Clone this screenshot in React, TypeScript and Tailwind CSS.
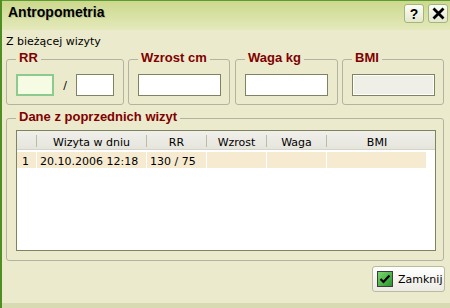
import React from "react";

const legendCls =
  "px-[3px] pb-[3px] font-['Liberation_Sans',sans-serif] font-bold text-[13px] leading-[15px] text-[#800000]";

const TitleBar = () => (
  <div className="h-[30px] flex items-start pt-[3px] pl-[6px] pr-[2px] border-t border-[#5f9b33] bg-gradient-to-b from-[#cbd98c] to-[#e5e9bb]">
    <div className="flex-1 font-['Liberation_Sans',sans-serif] font-bold text-[14px] leading-[17px] [text-shadow:1px_1px_0_#b9c58d]">
      Antropometria
    </div>
    <div className="flex gap-[4px]">
      <div className="w-[20px] h-[19px] rounded-[3px] border border-[#a3b47f] bg-gradient-to-b from-[#fdfdf6] to-[#e4e8cc] flex items-center justify-center font-['Liberation_Sans',sans-serif] font-bold text-[14px] leading-none">
        ?
      </div>
      <div className="w-[20px] h-[19px] rounded-[3px] border border-[#a3b47f] bg-gradient-to-b from-[#fdfdf6] to-[#e4e8cc] flex items-center justify-center">
        <svg width="13" height="13" viewBox="0 0 13 13">
          <path d="M1.5 1.5 L11.5 11.5 M11.5 1.5 L1.5 11.5" stroke="#000" strokeWidth="2.8" />
        </svg>
      </div>
    </div>
  </div>
);

const Field = ({ disabled }: { disabled?: boolean }) =>
  disabled ? (
    <div className="w-[83px] h-[22px] border border-[#7f8460] bg-[#efefe8] shadow-[inset_0_0_0_1px_#ffffff]" />
  ) : (
    <div className="w-[83px] h-[22px] border border-[#7f8460] bg-white" />
  );

const cols = [
  { w: "w-[20px]", h: "", v: "1", sep: true },
  { w: "w-[110px]", h: "Wizyta w dniu", v: "20.10.2006 12:18", sep: true },
  { w: "w-[60px]", h: "RR", v: "130 / 75", sep: true },
  { w: "w-[60px]", h: "Wzrost", v: "", sep: true },
  { w: "w-[60px]", h: "Waga", v: "", sep: true },
  { w: "w-[100px]", h: "BMI", v: "", sep: false },
];

const CheckIcon = () => (
  <svg width="16" height="16" viewBox="0 0 16 16">
    <defs>
      <linearGradient id="g" x1="0" y1="0" x2="1" y2="1">
        <stop offset="0" stopColor="#7fd86f" />
        <stop offset="1" stopColor="#24952a" />
      </linearGradient>
    </defs>
    <rect x="0.5" y="0.5" width="15" height="15" fill="url(#g)" stroke="#3c3c3c" />
    <path d="M3.5 8 L6.5 11 L12.5 4.5" fill="none" stroke="#000" strokeWidth="2.2" />
  </svg>
);

export default function App() {
  return (
    <div className="w-[450px] h-[308px] flex flex-col bg-[#eceacd] border-l-2 border-[#4e8f22] font-['DejaVu_Sans',sans-serif] text-[11px] leading-[13px] text-black overflow-hidden">
      <TitleBar />
      <div className="flex flex-col flex-1 pl-[4px] pr-[6px] pt-[5px]">
        <div>Z bieżącej wizyty</div>

        <div className="flex mt-[2px]">
          <fieldset className="w-[118px] border border-[#b4b2a0] rounded-[3px] pl-[9px] pr-[8px] pt-[6px] pb-[8px]">
            <legend className={legendCls}>RR</legend>
            <div className="flex items-center">
              <div className="w-[38px] h-[22px] border-2 border-[#8dca8d] bg-[#f6fce3]" />
              <div className="w-[22px] text-center">/</div>
              <div className="w-[38px] h-[22px] border border-[#7f8460] bg-white" />
            </div>
          </fieldset>
          <fieldset className="w-[102px] ml-[4px] border border-[#b4b2a0] rounded-[3px] pl-[9px] pr-[8px] pt-[6px] pb-[8px]">
            <legend className={legendCls}>Wzrost cm</legend>
            <Field />
          </fieldset>
          <fieldset className="w-[103px] ml-[5px] border border-[#b4b2a0] rounded-[3px] pl-[9px] pr-[8px] pt-[6px] pb-[8px]">
            <legend className={legendCls}>Waga kg</legend>
            <Field />
          </fieldset>
          <fieldset className="w-[102px] ml-[4px] border border-[#b4b2a0] rounded-[3px] pl-[9px] pr-[8px] pt-[6px] pb-[8px]">
            <legend className={legendCls}>BMI</legend>
            <Field disabled />
          </fieldset>
        </div>

        <fieldset className="mt-[4px] border border-[#b4b2a0] rounded-[3px] pl-[9px] pr-[7px] pt-[3px] pb-[9px]">
          <legend className={legendCls}>Dane z poprzednich wizyt</legend>
          <div className="h-[121px] border border-[#7f8460] bg-white flex flex-col">
            <div className="h-[19px] flex bg-gradient-to-b from-[#f0efea] to-[#e6e5dd] border-b border-[#d6d3c4]">
              {cols.map((c, i) => (
                <div key={i} className={`${c.w} flex items-start`}>
                  <div className="flex-1 text-center pt-[5px] leading-[13px]">{c.h}</div>
                  {c.sep && <div className="w-px h-[12px] mt-[4px] bg-[#bdbaa8]" />}
                </div>
              ))}
            </div>
            <div className="flex mt-[2px] h-[16px]">
              {cols.map((c, i) => (
                <div
                  key={i}
                  className={`${c.w} h-full bg-[#f6ebd1] border-r border-white pt-[3px] leading-[13px] whitespace-nowrap ${i === 0 ? "pl-[5px]" : "pl-[3px]"}`}
                >
                  {c.v}
                </div>
              ))}
            </div>
          </div>
        </fieldset>

        <div className="self-end mr-[-1px] mt-[5px] w-[73px] h-[26px] rounded-[3px] border border-[#b9bb9c] bg-gradient-to-b from-[#ffffff] to-[#ebeae3] flex items-center pl-[4px] gap-[5px]">
          <CheckIcon />
          <span>Zamknij</span>
        </div>

        <div className="flex-1" />
      </div>
      <div className="h-[5px] bg-[#d8dab2]" />
    </div>
  );
}
